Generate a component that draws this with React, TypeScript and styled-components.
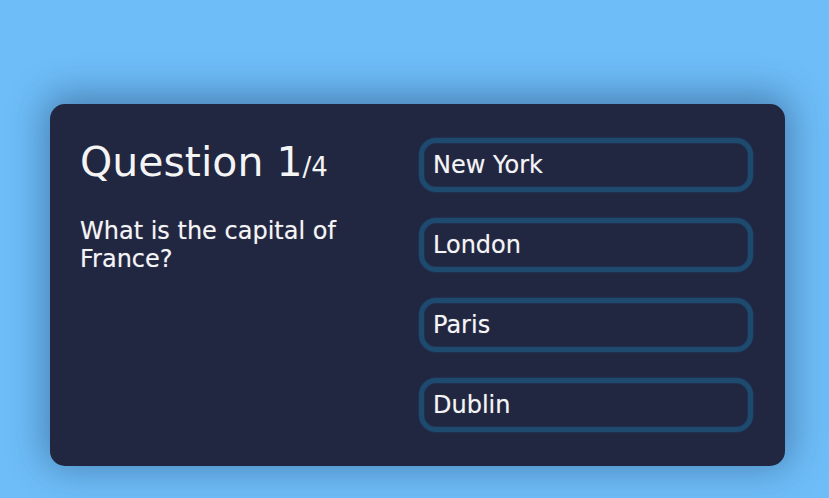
import { FC } from "react";
import styled, { createGlobalStyle } from "styled-components";

const GlobalStyle = createGlobalStyle`
	html, body {
		margin: 0;
		padding: 0;
		background: #6ebdf8;
		font-family: "DejaVu Sans", Verdana, sans-serif;
	}
`;

const answers = ["New York", "London", "Paris", "Dublin"];

const App: FC = () => {
	return (
		<>
			<GlobalStyle />
			<Page>
				<Card>
					<QuestionSection>
						<QuestionCount>
							<span>Question 1</span>/4
						</QuestionCount>
						<QuestionText>What is the capital of France?</QuestionText>
					</QuestionSection>
					<AnswerSection>
						{answers.map((item) => (
							<AnswerButton key={item}>{item}</AnswerButton>
						))}
					</AnswerSection>
				</Card>
			</Page>
		</>
	);
};

export default App;

const Page = styled.div`
	width: 829px;
	height: 498px;
	box-sizing: border-box;
	padding: 104px 44px 0 50px;
	overflow: hidden;
`;

const Card = styled.div`
	box-sizing: border-box;
	width: 735px;
	height: 362px;
	background: #212641;
	border-radius: 15px;
	padding: 34px 32px 34px 30px;
	display: flex;
	justify-content: space-between;
	box-shadow: 0 -4px 36px 6px rgba(30, 60, 100, 0.45);
`;

const QuestionSection = styled.div`
	width: 300px;
	color: #f4f4f4;
`;

const QuestionCount = styled.div`
	font-size: 26px;
	line-height: 48px;
	margin: 0 0 26px 0;
	white-space: nowrap;

	span {
		font-size: 41px;
	}
`;

const QuestionText = styled.div`
	font-size: 24px;
	line-height: 28px;
	width: 270px;
	text-shadow: 0 0 1px rgba(255, 255, 255, 0.4);
`;

const AnswerSection = styled.div`
	width: 334px;
	display: flex;
	flex-direction: column;
	gap: 26px;
`;

const AnswerButton = styled.button`
	box-sizing: border-box;
	height: 54px;
	width: 100%;
	background: #212641;
	border: 5px solid #1d4a6e;
	border-radius: 17px;
	box-shadow: 0 0 2px #1d4a6e, inset 0 0 2px #1d4a6e;
	color: #f4f4f4;
	font-family: "DejaVu Sans", Verdana, sans-serif;
	font-size: 24px;
	text-align: left;
	padding: 0 9px;
	text-shadow: 0 0 1px rgba(255, 255, 255, 0.4);
	cursor: pointer;
`;
